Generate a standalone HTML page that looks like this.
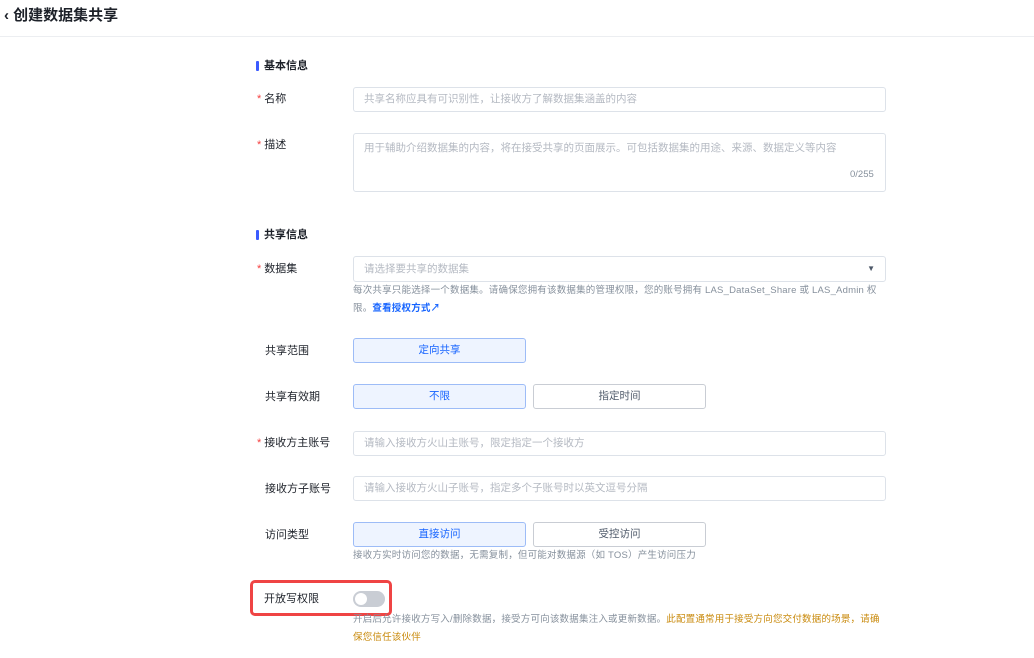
<!DOCTYPE html>
<html><head><meta charset="utf-8"><style>
*{box-sizing:border-box;margin:0;padding:0}
body{width:1034px;height:658px;background:#fff;font-family:"Liberation Sans","Noto Sans CJK SC",sans-serif;position:relative;overflow:hidden;color:#1d2129}
.a{position:absolute;white-space:nowrap}
.lbl{font-size:11px;color:#1d2129;line-height:14px}
.star{color:#f53f3f;margin-right:3px}
.inp{position:absolute;left:353px;width:533px;border:1px solid #dde2e9;border-radius:3px;font-size:10.5px;color:#b4b9c2;padding-left:10px}
.btn{position:absolute;height:25px;border:1px solid #c9cdd4;border-radius:3px;font-size:10.5px;text-align:center;line-height:23px;color:#4e5969}
.on{background:#eef4ff;border-color:#9dbcf7;color:#1664ff}
.sec{font-size:11px;font-weight:bold;line-height:14px}
.bar{position:absolute;width:3px;height:10px;background:#3b5bff;border-radius:1px}
.help{font-size:9.5px;color:#86909c;line-height:18px;letter-spacing:0.2px}
</style></head><body>
<div class="a" style="left:4px;top:6px;font-size:15px;font-weight:bold;line-height:20px;color:#1d2129">‹ 创建数据集共享</div>
<div class="a" style="left:0;top:36px;width:1034px;height:1px;background:#eceef1"></div>

<div class="bar" style="left:256px;top:61px"></div>
<div class="a sec" style="left:264px;top:59px">基本信息</div>
<div class="a lbl" style="left:257px;top:92px"><span class="star">*</span>名称</div>
<div class="inp" style="top:87px;height:25px;line-height:23px">共享名称应具有可识别性，让接收方了解数据集涵盖的内容</div>
<div class="a lbl" style="left:257px;top:138px"><span class="star">*</span>描述</div>
<div class="inp" style="top:133px;height:59px;padding-top:6px">用于辅助介绍数据集的内容，将在接受共享的页面展示。可包括数据集的用途、来源、数据定义等内容</div>
<div class="a" style="left:850px;top:169px;font-size:9.5px;color:#86909c">0/255</div>

<div class="bar" style="left:256px;top:230px"></div>
<div class="a sec" style="left:264px;top:228px">共享信息</div>
<div class="a lbl" style="left:257px;top:262px"><span class="star">*</span>数据集</div>
<div class="inp" style="top:256px;height:26px;line-height:24px">请选择要共享的数据集<span style="position:absolute;right:10px;color:#4e5969;font-size:8px">▼</span></div>
<div class="a help" style="left:353px;top:282px">每次共享只能选择一个数据集。请确保您拥有该数据集的管理权限，您的账号拥有 LAS_DataSet_Share 或 LAS_Admin 权</div>
<div class="a help" style="left:353px;top:300px">限。<span style="color:#1664ff;font-weight:bold">查看授权方式↗</span></div>

<div class="a lbl" style="left:265px;top:344px">共享范围</div>
<div class="btn on" style="left:353px;top:338px;width:173px">定向共享</div>
<div class="a lbl" style="left:265px;top:390px">共享有效期</div>
<div class="btn on" style="left:353px;top:384px;width:173px">不限</div>
<div class="btn" style="left:533px;top:384px;width:173px">指定时间</div>

<div class="a lbl" style="left:257px;top:436px"><span class="star">*</span>接收方主账号</div>
<div class="inp" style="top:431px;height:25px;line-height:23px">请输入接收方火山主账号，限定指定一个接收方</div>
<div class="a lbl" style="left:265px;top:482px">接收方子账号</div>
<div class="inp" style="top:476px;height:25px;line-height:23px">请输入接收方火山子账号，指定多个子账号时以英文逗号分隔</div>

<div class="a lbl" style="left:265px;top:528px">访问类型</div>
<div class="btn on" style="left:353px;top:522px;width:173px">直接访问</div>
<div class="btn" style="left:533px;top:522px;width:173px">受控访问</div>
<div class="a help" style="left:353px;top:547px">接收方实时访问您的数据，无需复制，但可能对数据源（如 TOS）产生访问压力</div>

<div class="a" style="left:250px;top:580px;width:142px;height:36px;border:3px solid #ef4444;border-radius:5px"></div>
<div class="a lbl" style="left:264px;top:592px">开放写权限</div>
<div class="a" style="left:353px;top:591px;width:32px;height:16px;border-radius:8px;background:#c9cdd4"><div style="position:absolute;left:2px;top:2px;width:12px;height:12px;border-radius:50%;background:#fff"></div></div>
<div class="a help" style="left:353px;top:611px">开启后允许接收方写入/删除数据，接受方可向该数据集注入或更新数据。<span style="color:#c98a0c">此配置通常用于接受方向您交付数据的场景，请确</span></div>
<div class="a help" style="left:353px;top:629px;color:#c98a0c">保您信任该伙伴</div>
</body></html>
